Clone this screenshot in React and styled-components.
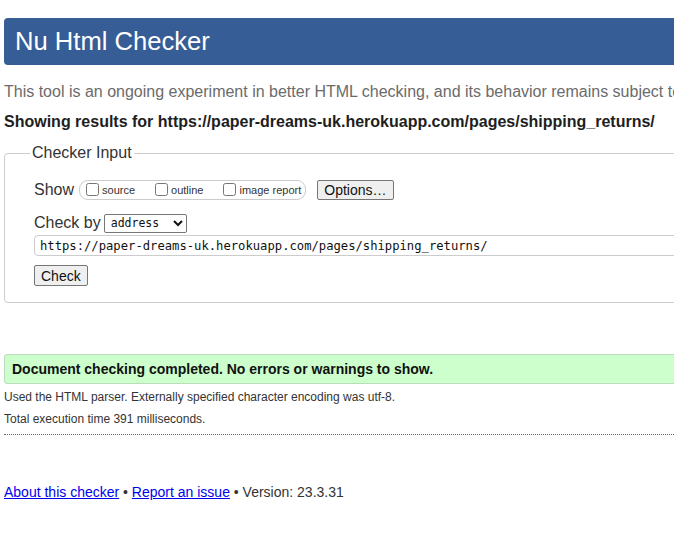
import React from "react";
import styled, { createGlobalStyle } from "styled-components";

const Global = createGlobalStyle`
  html, body {
    margin: 0;
    padding: 0;
    background: #fff;
    overflow: hidden;
  }
  body {
    font-family: "Liberation Sans", Arial, sans-serif;
    color: #222;
  }
`;

const Page = styled.div`
  width: 900px;
  padding: 0 0 40px 4px;
`;

const Header = styled.h1`
  margin: 18px 0 0;
  height: 47px;
  line-height: 47px;
  padding-left: 11px;
  background: #365d95;
  border-radius: 4px;
  color: #fff;
  font-size: 25.6px;
  font-weight: normal;
`;

const Intro = styled.p`
  margin: 18px 0 0;
  font-size: 16px;
  line-height: 18px;
  color: #6b6b6b;
  white-space: nowrap;
`;

const Results = styled.p`
  margin: 12px 0 0;
  font-size: 16px;
  line-height: 18px;
  font-weight: bold;
  color: #1e1e1e;
  white-space: nowrap;
`;

const Fieldset = styled.fieldset`
  margin: 13px 0 0;
  padding: 17px 0 16px 29px;
  border: 1px solid #cccccc;
  border-radius: 4px;
  min-width: 0;
`;

const Legend = styled.legend`
  font-size: 16px;
  line-height: 18px;
  padding: 0 2px;
  margin-left: -4px;
  color: #333;
`;

const Row = styled.div`
  display: flex;
  align-items: center;
  height: ${(p) => p.$h || 21}px;
  margin-top: ${(p) => p.$mt || 0}px;
  font-size: 16px;
  color: #333;
`;

const Label = styled.span`
  margin-right: ${(p) => p.$mr || 4}px;
`;

const CheckGroup = styled.div`
  display: flex;
  align-items: center;
  gap: 20px;
  height: 18px;
  padding: 0 4px 0 6px;
  border: 1px solid #cccccc;
  border-radius: 9px;
`;

const Opt = styled.label`
  display: flex;
  align-items: center;
  font-size: 11px;
  color: #333;
`;

const Box = styled.input.attrs({ type: "checkbox" })`
  width: 13px;
  height: 13px;
  margin: 0 3px 0 0;
`;

const Button = styled.button`
  height: ${(p) => p.$h || 21}px;
  padding: 0 6px;
  margin-left: ${(p) => p.$ml || 0}px;
  font-family: "Liberation Sans", Arial, sans-serif;
  font-size: 14px;
  color: #111;
  background: #efefef;
  border: 1px solid #767676;
  border-radius: 2px;
`;

const Select = styled.select`
  width: 83px;
  height: 19px;
  font-family: "DejaVu Sans Mono", monospace;
  font-size: 11.5px;
  color: #111;
  background: #fff;
  border: 1px solid #767676;
  border-radius: 2px;
  padding: 0 0 0 2px;
`;

const UrlInput = styled.input`
  display: block;
  box-sizing: border-box;
  width: 800px;
  height: 21px;
  margin-top: 2px;
  padding: 0 5px;
  font-family: "DejaVu Sans Mono", monospace;
  font-size: 12.2px;
  color: #111;
  border: 1px solid #cccccc;
  border-radius: 4px;
`;

const CheckWrap = styled.div`
  margin-top: 9px;
`;

const Success = styled.p`
  margin: 51px 0 0;
  height: 28px;
  line-height: 28px;
  padding-left: 7px;
  background: #ccffcc;
  border: 1px solid #b9dcb9;
  border-radius: 3px;
  font-size: 14px;
  font-weight: bold;
  color: #111;
`;

const Detail = styled.p`
  margin: ${(p) => p.$mt}px 0 0;
  font-size: 12px;
  line-height: 14px;
  color: #333;
`;

const Rule = styled.hr`
  margin: 8px 0 0;
  border: 0;
  border-top: 1px dotted #666;
  height: 0;
`;

const Footer = styled.p`
  margin: 49px 0 0;
  font-size: 14px;
  line-height: 16px;
  color: #333;
`;

const Link = styled.a`
  color: #0000ee;
  text-decoration: underline;
`;

export default function App() {
  const url = "https://paper-dreams-uk.herokuapp.com/pages/shipping_returns/";
  return (
    <Page>
      <Global />
      <Header>Nu Html Checker</Header>
      <Intro>
        This tool is an ongoing experiment in better HTML checking, and its behavior remains subject to change
      </Intro>
      <Results>Showing results for {url}</Results>
      <Fieldset>
        <Legend>Checker Input</Legend>
        <Row $h={21}>
          <Label $mr={5}>Show</Label>
          <CheckGroup>
            <Opt>
              <Box />
              source
            </Opt>
            <Opt>
              <Box />
              outline
            </Opt>
            <Opt>
              <Box />
              image report
            </Opt>
          </CheckGroup>
          <Button $ml={11} $h={20}>Options…</Button>
        </Row>
        <Row $h={20} $mt={13}>
          <Label $mr={3}>Check by</Label>
          <Select defaultValue="address">
            <option value="address">address</option>
            <option value="file">file upload</option>
            <option value="text">text input</option>
          </Select>
        </Row>
        <UrlInput readOnly value={url} />
        <CheckWrap>
          <Button>Check</Button>
        </CheckWrap>
      </Fieldset>
      <Success>Document checking completed. No errors or warnings to show.</Success>
      <Detail $mt={6}>
        Used the HTML parser. Externally specified character encoding was utf-8.
      </Detail>
      <Detail $mt={8}>Total execution time 391 milliseconds.</Detail>
      <Rule />
      <Footer>
        <Link href="#">About this checker</Link> • <Link href="#">Report an issue</Link> • Version: 23.3.31
      </Footer>
    </Page>
  );
}
